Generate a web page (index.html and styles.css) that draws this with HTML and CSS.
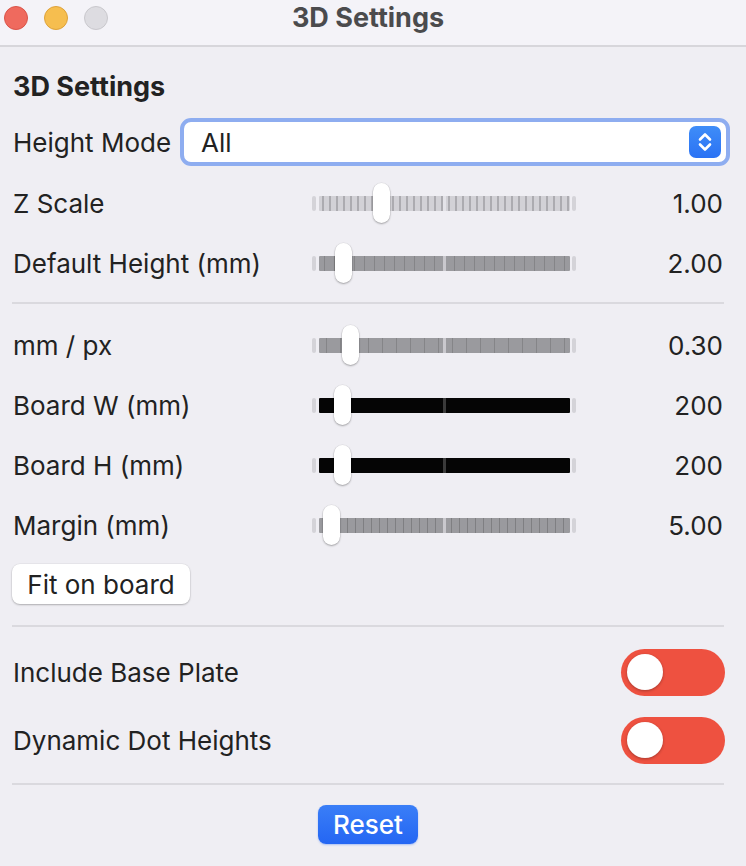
FILE: index.html
```html
<!DOCTYPE html>
<html lang="en">
<head>
    <meta charset="UTF-8">
    <meta name="viewport" content="width=device-width, initial-scale=1.0">
    <title>3D Settings</title>
    <link rel="stylesheet" href="styles.css">
</head>
<body>
    <div class="window">
        <header class="titlebar">
            <div class="lights">
                <span class="light close"></span>
                <span class="light minimize"></span>
                <span class="light zoom"></span>
            </div>
            <h1>3D Settings</h1>
        </header>

        <main class="panel">
            <h2>3D Settings</h2>

            <div class="select-row">
                <label>Height Mode</label>
                <div class="select">
                    <span>All</span>
                    <span class="stepper">
                        <svg width="32" height="32" viewBox="0 0 32 32">
                            <path d="M11 13.5 L16 8.5 L21 13.5 M11 18.5 L16 23.5 L21 18.5" fill="none" stroke="#fff" stroke-width="2.6" stroke-linecap="round" stroke-linejoin="round"/>
                        </svg>
                    </span>
                </div>
            </div>

            <div class="slider-row first">
                <label>Z Scale</label>
                <div class="slider"><div class="track pale"></div><div class="thumb" style="left: 61px"></div></div>
                <span class="value">1.00</span>
            </div>

            <div class="slider-row">
                <label>Default Height (mm)</label>
                <div class="slider"><div class="track grey"></div><div class="thumb" style="left: 23px"></div></div>
                <span class="value">2.00</span>
            </div>

            <hr>

            <div class="slider-row">
                <label>mm / px</label>
                <div class="slider"><div class="track grey wide"></div><div class="thumb" style="left: 30px"></div></div>
                <span class="value">0.30</span>
            </div>

            <div class="slider-row">
                <label>Board W (mm)</label>
                <div class="slider"><div class="track black"></div><div class="thumb" style="left: 22px"></div></div>
                <span class="value">200</span>
            </div>

            <div class="slider-row">
                <label>Board H (mm)</label>
                <div class="slider"><div class="track black"></div><div class="thumb" style="left: 22px"></div></div>
                <span class="value">200</span>
            </div>

            <div class="slider-row">
                <label>Margin (mm)</label>
                <div class="slider"><div class="track grey dense"></div><div class="thumb" style="left: 11px"></div></div>
                <span class="value">5.00</span>
            </div>

            <button class="plain-btn">Fit on board</button>

            <hr class="gap">

            <div class="toggle-row">
                <label>Include Base Plate</label>
                <span class="toggle"><span class="knob"></span></span>
            </div>

            <div class="toggle-row">
                <label>Dynamic Dot Heights</label>
                <span class="toggle"><span class="knob"></span></span>
            </div>

            <hr class="last">

            <div class="actions">
                <button class="primary-btn">Reset</button>
            </div>
        </main>
    </div>
</body>
</html>
```

FILE: styles.css
```css
* {
    margin: 0;
    padding: 0;
    box-sizing: border-box;
}

body {
    font-family: Inter, "Liberation Sans", sans-serif;
    background-color: #efeef3;
    color: #222;
    font-size: 26px;
}

.window {
    width: 746px;
    height: 866px;
}

/* title bar */
.titlebar {
    position: relative;
    height: 47px;
    background: #f4f3f8;
    border-bottom: 2px solid #d7d6db;
    display: flex;
    align-items: center;
    justify-content: center;
}

.titlebar h1 {
    font-size: 27px;
    font-weight: 700;
    color: #4b4b4d;
    margin: -10px 10px 0 0;
}

.lights {
    position: absolute;
    left: 4px;
    top: 6px;
    display: flex;
    gap: 16px;
}

.light {
    width: 24px;
    height: 24px;
    border-radius: 50%;
    border: 1px solid;
}

.light.close {
    background: #ef6a5e;
    border-color: #da5449;
}

.light.minimize {
    background: #f6be4f;
    border-color: #dea23a;
}

.light.zoom {
    background: #dddce1;
    border-color: #c9c8cd;
}

/* panel */
.panel {
    padding: 24px 22px 0 12px;
}

.panel h2 {
    font-size: 27px;
    font-weight: 700;
    line-height: 32px;
    padding-left: 1px;
    margin-bottom: 15px;
}

label {
    padding-left: 1px;
}

.select-row {
    display: flex;
    align-items: center;
    justify-content: space-between;
    height: 48px;
    margin-right: -6px;
}

.select {
    width: 550px;
    height: 48px;
    background: #fff;
    border: 4px solid #8eadf0;
    border-radius: 11px;
    display: flex;
    align-items: center;
    justify-content: space-between;
    padding: 0 5px 0 17px;
}

.stepper {
    width: 32px;
    height: 32px;
    border-radius: 7px;
    background: linear-gradient(#3f8df8, #2a72f4);
    display: flex;
}

/* slider rows */
.slider-row {
    display: grid;
    grid-template-columns: 300px 264px 1fr;
    align-items: center;
    height: 60px;
}

.slider-row.first {
    margin-top: 7px;
}

.value {
    text-align: right;
    padding-right: 1px;
}

.slider {
    position: relative;
    height: 40px;
    display: flex;
    align-items: center;
}

.slider::before,
.slider::after {
    content: "";
    position: absolute;
    top: 13px;
    width: 4px;
    height: 15px;
    border-radius: 2px;
    background: #d4d3d8;
}

.slider::before {
    left: 0;
}

.slider::after {
    right: 0;
}

.track {
    height: 15px;
    width: 251px;
    margin-left: 7px;
    border-radius: 1px;
}

.track.pale {
    background-color: #d2d1d6;
    background-image:
        linear-gradient(90deg, transparent 49.6%, #e4e3e8 49.6% 50.4%, transparent 50.4%),
        repeating-linear-gradient(90deg, transparent 0 3px, #acabb0 3px 5px, transparent 5px 7px);
}

.track.grey {
    background-color: #9a9a9e;
    background-image:
        linear-gradient(90deg, transparent 49.6%, #c9c8cd 49.6% 50.4%, transparent 50.4%),
        repeating-linear-gradient(90deg, transparent 0 5px, #858588 5px 6px, transparent 6px 10px);
}

.track.grey.wide {
    background-image:
        linear-gradient(90deg, transparent 49.6%, #c9c8cd 49.6% 50.4%, transparent 50.4%),
        repeating-linear-gradient(90deg, transparent 0 7px, #858588 7px 8px, transparent 8px 14px);
}

.track.grey.dense {
    background-image:
        linear-gradient(90deg, transparent 49.6%, #c9c8cd 49.6% 50.4%, transparent 50.4%),
        repeating-linear-gradient(90deg, transparent 0 4px, #7f7f82 4px 5px, transparent 5px 8px);
}

.track.black {
    background-color: #050505;
    background-image: linear-gradient(90deg, transparent 49.6%, #3a3a3a 49.6% 50.4%, transparent 50.4%);
}

.thumb {
    position: absolute;
    top: 0;
    width: 17px;
    height: 40px;
    background: #fff;
    border-radius: 9px;
    box-shadow: 0 1px 2px rgba(0, 0, 0, 0.3), 0 0 0 0.5px rgba(0, 0, 0, 0.08);
}

hr {
    border: none;
    height: 2px;
    background: #dad9de;
    margin: 9px 0 11px;
}

/* buttons */
.plain-btn {
    font-family: inherit;
    font-size: 26px;
    color: #222;
    background: #fff;
    border: none;
    border-radius: 8px;
    height: 40px;
    width: 178px;
    margin-top: 9px;
    box-shadow: 0 1px 2px rgba(0, 0, 0, 0.25), 0 0 0 0.5px rgba(0, 0, 0, 0.06);
}

hr.gap {
    margin-top: 21px;
}

.toggle-row {
    display: flex;
    align-items: center;
    justify-content: space-between;
    height: 68px;
}

.toggle {
    position: relative;
    width: 104px;
    height: 47px;
    border-radius: 24px;
    background: #ee5140;
    margin-right: -1px;
}

.knob {
    position: absolute;
    left: 6px;
    top: 5px;
    width: 36px;
    height: 36px;
    border-radius: 50%;
    background: #fff;
    box-shadow: 0 1px 3px rgba(0, 0, 0, 0.3);
}

hr.last {
    margin-top: 9px;
}

.actions {
    display: flex;
    justify-content: center;
    padding-top: 9px;
}

.primary-btn {
    font-family: inherit;
    font-size: 26px;
    font-weight: 500;
    color: #fff;
    background: linear-gradient(#3a7ef7, #2466f3);
    border: none;
    border-radius: 8px;
    width: 100px;
    height: 39px;
    box-shadow: 0 1px 2px rgba(36, 102, 243, 0.35);
}
```
